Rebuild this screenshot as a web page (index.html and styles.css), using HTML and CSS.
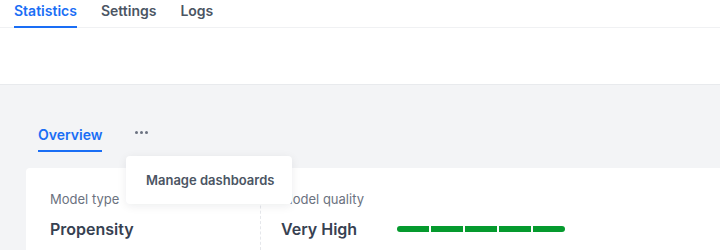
FILE: index.html
```html
<!DOCTYPE html>
<html>
<head>
<meta charset="utf-8">
<link rel="stylesheet" href="styles.css">
</head>
<body>
<div class="top">
  <nav class="tabs">
    <div class="tab active">Statistics</div>
    <div class="tab">Settings</div>
    <div class="tab">Logs</div>
  </nav>
</div>
<main class="main">
  <div class="subtabs">
    <div class="subtab active">Overview</div>
    <div class="more">
      <span class="dot"></span><span class="dot"></span><span class="dot"></span>
    </div>
  </div>
  <div class="menu">
    <div class="menu-item">Manage dashboards</div>
  </div>
  <section class="card">
    <div class="col col-first">
      <div class="label">Model type</div>
      <div class="value">Propensity</div>
    </div>
    <div class="col col-second">
      <div class="label">Model quality</div>
      <div class="value-row">
        <div class="value value-fixed">Very High</div>
        <div class="meter">
          <span class="seg"></span><span class="seg"></span><span class="seg"></span><span class="seg"></span><span class="seg"></span>
        </div>
      </div>
    </div>
  </section>
</main>
</body>
</html>
```
FILE: styles.css
```css
* { box-sizing: border-box; }
html, body { margin: 0; padding: 0; }
body {
  font-family: Inter, "Noto Sans", sans-serif;
  background: #f3f4f6;
  width: 720px;
  height: 250px;
  overflow: hidden;
  color: #374151;
}
.top {
  background: #ffffff;
  height: 85px;
  border-bottom: 1px solid #e8eaed;
}
.tabs {
  display: flex;
  gap: 24px;
  padding-left: 14px;
  height: 28px;
  border-bottom: 1px solid #f0f1f3;
}
.tab {
  font-size: 14px;
  font-weight: 600;
  line-height: 20px;
  padding-top: 1px;
  height: 28px;
  color: #4b5563;
  border-bottom: 2px solid transparent;
  margin-bottom: -1px;
}
.tab.active {
  color: #1a6ef5;
  border-bottom-color: #1a6ef5;
}
.main {
  position: relative;
  padding-left: 26px;
}
.subtabs {
  display: flex;
  align-items: flex-start;
  gap: 31px;
  padding-top: 40px;
  padding-left: 12px;
}
.subtab {
  font-size: 14px;
  font-weight: 600;
  line-height: 20px;
  padding-bottom: 5px;
  border-bottom: 2px solid transparent;
}
.subtab.active {
  color: #1a6ef5;
  border-bottom-color: #1a6ef5;
}
.more {
  display: flex;
  gap: 2px;
  padding-top: 6px;
  padding-left: 2px;
}
.dot {
  width: 3px;
  height: 3px;
  border-radius: 50%;
  background: #6b7280;
}
.menu {
  position: absolute;
  left: 126px;
  top: 71px;
  width: 166px;
  height: 48px;
  background: #ffffff;
  border-radius: 4px;
  box-shadow: 0 2px 10px rgba(17, 24, 39, 0.08);
  z-index: 5;
  display: flex;
  align-items: center;
  padding-left: 20px;
}
.menu-item {
  font-size: 13px;
  font-weight: 600;
  color: #4b5563;
  line-height: 18px;
}
.card {
  margin-top: 16px;
  background: #ffffff;
  border-radius: 4px 0 0 0;
  height: 82px;
  display: flex;
  padding-top: 22px;
  padding-left: 24px;
}
.col {
  display: flex;
  flex-direction: column;
  gap: 9px;
}
.col-first {
  width: 211px;
  border-right: 1px dashed #e5e7eb;
}
.col-second {
  padding-left: 20px;
}
.label {
  font-size: 13px;
  line-height: 18px;
  color: #6b7280;
}
.value {
  font-size: 16px;
  font-weight: 600;
  line-height: 24px;
  color: #374151;
}
.value-row {
  display: flex;
  align-items: center;
}
.value-fixed {
  width: 116px;
}
.meter {
  display: flex;
  gap: 2px;
}
.seg {
  width: 32px;
  height: 6px;
  background: #059a2e;
}
.seg:first-child { border-radius: 3px 0 0 3px; }
.seg:last-child { border-radius: 0 3px 3px 0; }
```
